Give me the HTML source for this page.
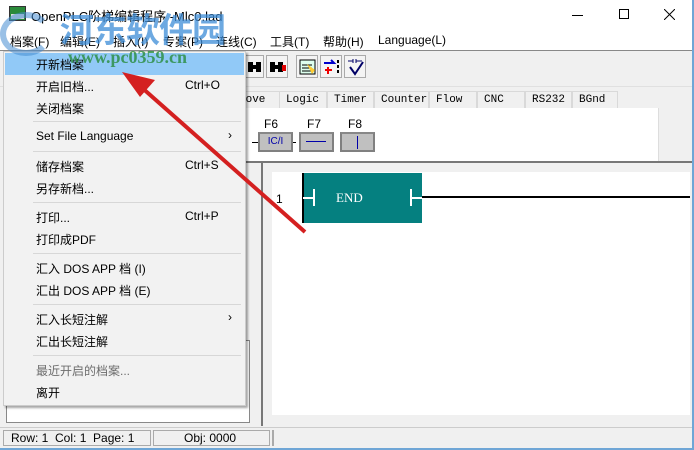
<!DOCTYPE html>
<html><head><meta charset="utf-8"><style>
*{margin:0;padding:0;box-sizing:border-box}
body{width:694px;height:450px;overflow:hidden;background:#f0f0f0;position:relative;font-family:"Microsoft YaHei","Liberation Sans","Noto Sans CJK SC",sans-serif;font-size:12px;color:#000}
.a{position:absolute}
.mi{position:absolute;left:33px;font-size:12px;white-space:nowrap}
.sc{position:absolute;left:182px;font-size:12px}
.sep{position:absolute;left:30px;width:208px;height:1px;background:#d7d7d7}
.tab{position:absolute;top:91px;height:18px;border:1px solid #d9d9d9;border-bottom:none;background:#f0f0f0;font-family:"Liberation Mono",monospace;font-size:11px;padding:2px 0 0 6px}
.tb{position:absolute;top:55px;width:22px;height:23px;border:1px solid #aaa;background:#f4f4f4}
.fb{position:absolute;top:132px;width:35px;height:20px;background:#c0c0c0;border:2px solid #808080;border-top-color:#888}
</style></head><body>
<div class="a" style="left:0;top:0;width:694px;height:30px;background:#fff"></div>
<div class="a" style="left:9px;top:6px;width:17px;height:15px;background:#2a8a3a;border:1px solid #333"><div style="position:absolute;left:1px;top:7px;width:13px;height:5px;background:#ddd"></div></div>
<div class="a" style="left:31px;top:6px;font-size:13px;font-family:'Liberation Sans','Noto Sans CJK SC',sans-serif">OpenPLC阶梯编辑程序 -Mlc0.lad</div>
<div class="a" style="left:572px;top:15px;width:11px;height:1px;background:#000"></div>
<div class="a" style="left:619px;top:9px;width:10px;height:10px;border:1px solid #000"></div>
<svg class="a" style="left:664px;top:9px" width="11" height="11"><path d="M0 0L11 11M11 0L0 11" stroke="#000" stroke-width="1"/></svg>
<div class="a" style="left:0;top:30px;width:694px;height:21px;background:#fff"></div>
<div class="a" style="left:0;width:694px;font-size:12px;white-space:nowrap;top:33px">
<span class="a" style="left:10px">档案(F)</span><span class="a" style="left:60px">编辑(E)</span><span class="a" style="left:113px">插入(I)</span><span class="a" style="left:163px">专案(P)</span><span class="a" style="left:216px">连线(C)</span><span class="a" style="left:270px">工具(T)</span><span class="a" style="left:323px">帮助(H)</span><span class="a" style="left:378px;font-family:'Liberation Sans',sans-serif">Language(L)</span></div>
<div class="a" style="left:0;top:50px;width:692px;height:1px;background:#888"></div>
<div class="tb" style="left:244px;width:20px"><svg width="20" height="21"><path d="M3 6h5v10H3zM11 6h5v10h-5zM7 9h5v4H7z" fill="#000"/></svg></div>
<div class="tb" style="left:266px"><svg width="22" height="21"><path d="M3 6h5v10H3zM11 6h5v10h-5zM7 9h5v4H7z" fill="#000"/><path d="M15 9h4v6h-4z" fill="#d00"/></svg></div>
<div class="tb" style="left:296px"><svg width="22" height="21"><rect x="3" y="4" width="15" height="14" fill="#dfe" stroke="#000"/><path d="M5 9h10M5 12h10M5 15h10" stroke="#000"/><path d="M10 8l8 6-3 4z" fill="#fc3"/></svg></div>
<div class="tb" style="left:320px"><svg width="22" height="21"><path d="M3 7h10l-3-3M3 7l10 0" stroke="#00c" stroke-width="2" fill="none"/><path d="M4 14h7M7 11v7" stroke="#e00" stroke-width="2"/><path d="M17 4v3M17 9v3M17 14v3" stroke="#000" stroke-width="2"/></svg></div>
<div class="tb" style="left:344px"><svg width="22" height="21"><path d="M3 5h5M8 3v4M11 3v4M11 5h6" stroke="#006" fill="none"/><path d="M5 11l5 7 8-12" stroke="#006" stroke-width="2" fill="none"/></svg></div>
<div class="a" style="left:0;top:86px;width:692px;height:1px;background:#e0e0e0"></div>
<div class="tab" style="left:232px;width:50px">Move</div>
<div class="tab" style="left:279px;width:48px">Logic</div>
<div class="tab" style="left:327px;width:47px">Timer</div>
<div class="tab" style="left:374px;width:55px">Counter</div>
<div class="tab" style="left:429px;width:48px">Flow</div>
<div class="tab" style="left:477px;width:48px">CNC</div>
<div class="tab" style="left:525px;width:47px">RS232</div>
<div class="tab" style="left:572px;width:46px">BGnd</div>
<div class="a" style="left:232px;top:108px;width:427px;height:53px;background:#fff;border-right:1px solid #ddd"></div>
<div class="a" style="left:264px;top:117px;font-size:12px">F6</div>
<div class="a" style="left:307px;top:117px;font-size:12px">F7</div>
<div class="a" style="left:348px;top:117px;font-size:12px">F8</div>
<div class="a" style="left:252px;top:142px;width:6px;height:1px;background:#000"></div>
<div class="a" style="left:292px;top:142px;width:4px;height:1px;background:#000"></div>
<div class="fb" style="left:258px"><div style="color:#00a;font-size:10px;text-align:center;line-height:16px">IC/I</div></div>
<div class="fb" style="left:299px"><div style="position:absolute;left:5px;top:7px;width:20px;height:1px;background:#00a"></div></div>
<div class="fb" style="left:340px"><div style="position:absolute;left:15px;top:2px;width:1px;height:13px;background:#00a"></div></div>
<div class="a" style="left:232px;top:161px;width:460px;height:2px;background:#777"></div>
<div class="a" style="left:261px;top:163px;width:2px;height:263px;background:#777"></div>
<div class="a" style="left:272px;top:172px;width:418px;height:243px;background:#fff"></div>
<div class="a" style="left:276px;top:192px;font-size:12px">1</div>
<div class="a" style="left:302px;top:173px;width:120px;height:50px;background:#058080;border-left:2px solid #000"></div>
<div class="a" style="left:303px;top:197px;width:12px;height:2px;background:#fff"></div>
<div class="a" style="left:313px;top:189px;width:2px;height:17px;background:#fff"></div>
<div class="a" style="left:336px;top:190px;color:#fff;font-family:'Liberation Serif',serif;font-size:13px">END</div>
<div class="a" style="left:410px;top:189px;width:2px;height:17px;background:#fff"></div>
<div class="a" style="left:410px;top:197px;width:12px;height:2px;background:#fff"></div>
<div class="a" style="left:422px;top:196px;width:268px;height:2px;background:#000"></div>
<div class="a" style="left:6px;top:340px;width:244px;height:83px;background:#fff;border:1px solid #888"></div>
<div class="a" style="left:0;top:427px;width:692px;height:1px;background:#ccc"></div>
<div class="a" style="left:3px;top:430px;width:148px;height:16px;border:1px solid #aaa;font-size:12px;padding-left:7px;line-height:14px;font-family:'Liberation Sans',sans-serif">Row: 1&nbsp; Col: 1&nbsp; Page: 1</div>
<div class="a" style="left:153px;top:430px;width:117px;height:16px;border:1px solid #aaa;font-size:12px;padding-left:30px;line-height:14px;font-family:'Liberation Sans',sans-serif">Obj: 0000</div>
<div class="a" style="left:272px;top:430px;width:2px;height:16px;border-left:1px solid #aaa;border-right:1px solid #aaa"></div>
<div class="a" style="left:692px;top:0;width:2px;height:450px;background:#6fa6d6"></div>
<div class="a" style="left:0;top:448px;width:694px;height:2px;background:#6fa6d6"></div>
<div class="a" style="left:3px;top:51px;width:243px;height:355px;background:#f2f2f2;border:1px solid #ccc;box-shadow:2px 2px 2px rgba(0,0,0,.35)">
<div class="a" style="left:1px;top:1px;width:239px;height:22px;background:#91c9f7"></div>
</div>
<div class="a" style="left:3px;top:51px;width:243px;height:355px">
<div class="mi" style="top:5px">开新档案</div>
<div class="mi" style="top:27px">开启旧档...</div><div class="sc" style="top:27px">Ctrl+O</div>
<div class="mi" style="top:49px">关闭档案</div>
<div class="sep" style="top:70px"></div>
<div class="mi" style="top:78px;font-family:'Liberation Sans',sans-serif">Set File Language</div><div class="a" style="left:225px;top:77px">›</div>
<div class="sep" style="top:100px"></div>
<div class="mi" style="top:107px">储存档案</div><div class="sc" style="top:107px">Ctrl+S</div>
<div class="mi" style="top:129px">另存新档...</div>
<div class="sep" style="top:151px"></div>
<div class="mi" style="top:158px">打印...</div><div class="sc" style="top:158px">Ctrl+P</div>
<div class="mi" style="top:180px">打印成PDF</div>
<div class="sep" style="top:202px"></div>
<div class="mi" style="top:209px">汇入 DOS APP 档 (I)</div>
<div class="mi" style="top:231px">汇出 DOS APP 档 (E)</div>
<div class="sep" style="top:253px"></div>
<div class="mi" style="top:260px">汇入长短注解</div><div class="a" style="left:225px;top:259px">›</div>
<div class="mi" style="top:282px">汇出长短注解</div>
<div class="sep" style="top:304px"></div>
<div class="mi" style="top:311px;color:#6d6d6d">最近开启的档案...</div>
<div class="mi" style="top:333px">离开</div>
</div>
<div class="a" style="left:0;top:12px;width:52px;height:44px;border-radius:50%;border:6px solid rgba(70,140,210,.55);border-right-color:transparent"></div>
<div class="a" style="left:60px;top:8px;font-size:34px;font-weight:bold;color:rgba(60,140,215,.75);letter-spacing:-1px;font-family:'Noto Sans CJK SC',sans-serif;line-height:40px">河东软件园</div>
<div class="a" style="left:68px;top:47px;font-size:18px;font-weight:bold;color:rgba(40,140,60,.8);font-family:'Liberation Serif',serif">www.pc0359.cn</div>
<svg class="a" style="left:0;top:0" width="694" height="450"><line x1="305" y1="232" x2="140" y2="86" stroke="#d42020" stroke-width="4"/><path d="M122 72L155 80L140 97Z" fill="#d42020"/></svg>
</body></html>
